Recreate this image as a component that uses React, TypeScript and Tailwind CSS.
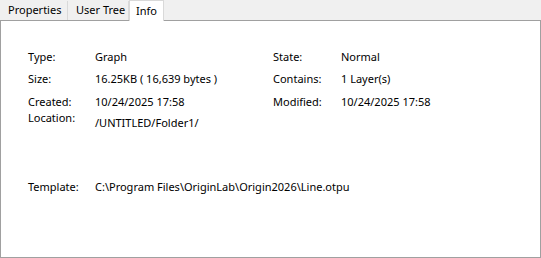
const rows = [
  { label: "Type:", value: "Graph", label2: "State:", value2: "Normal", mt: "mt-0" },
  { label: "Size:", value: "16.25KB ( 16,639 bytes )", label2: "Contains:", value2: "1 Layer(s)", mt: "mt-[6px]" },
  { label: "Created:", value: "10/24/2025 17:58", label2: "Modified:", value2: "10/24/2025 17:58", mt: "mt-[7px]" },
];

export default function App() {
  const font = { fontFamily: '"Segoe UI", "Noto Sans", sans-serif' };
  return (
    <div className="w-[541px] h-[258px] bg-[#f0f0f0] text-[11px] text-black flex flex-col whitespace-nowrap" style={font}>
      <div className="flex h-[20px] items-end">
        <div className="h-[19px] pl-[8px] flex items-center border-r border-[#d9d9d9] w-[68px]">Properties</div>
        <div className="h-[19px] pl-[8px] flex items-center border-r border-[#d9d9d9] w-[61px]">User Tree</div>
        <div className="h-[21px] w-[35px] pl-[6px] flex items-center bg-white border-x border-t border-[#d9d9d9] -mb-px relative z-10">Info</div>
        <div className="flex-1" />
      </div>
      <div className="flex-1 bg-white border border-[#a0a0a0] border-t-[#a0a0a0] pl-[27px] pt-[28px] leading-[16px]">
        {rows.map((r) => (
          <div key={r.label} className={`flex ${r.mt}`}>
            <div className="w-[67px]">{r.label}</div>
            <div className="w-[178px]">{r.value}</div>
            <div className="w-[68px]">{r.label2}</div>
            <div>{r.value2}</div>
          </div>
        ))}
        <div className="flex">
          <div className="w-[67px]">Location:</div>
          <div className="pt-[5px]">/UNTITLED/Folder1/</div>
        </div>
        <div className="flex mt-[48px]">
          <div className="w-[67px]">Template:</div>
          <div>C:\Program Files\OriginLab\Origin2026\Line.otpu</div>
        </div>
      </div>
    </div>
  );
}
